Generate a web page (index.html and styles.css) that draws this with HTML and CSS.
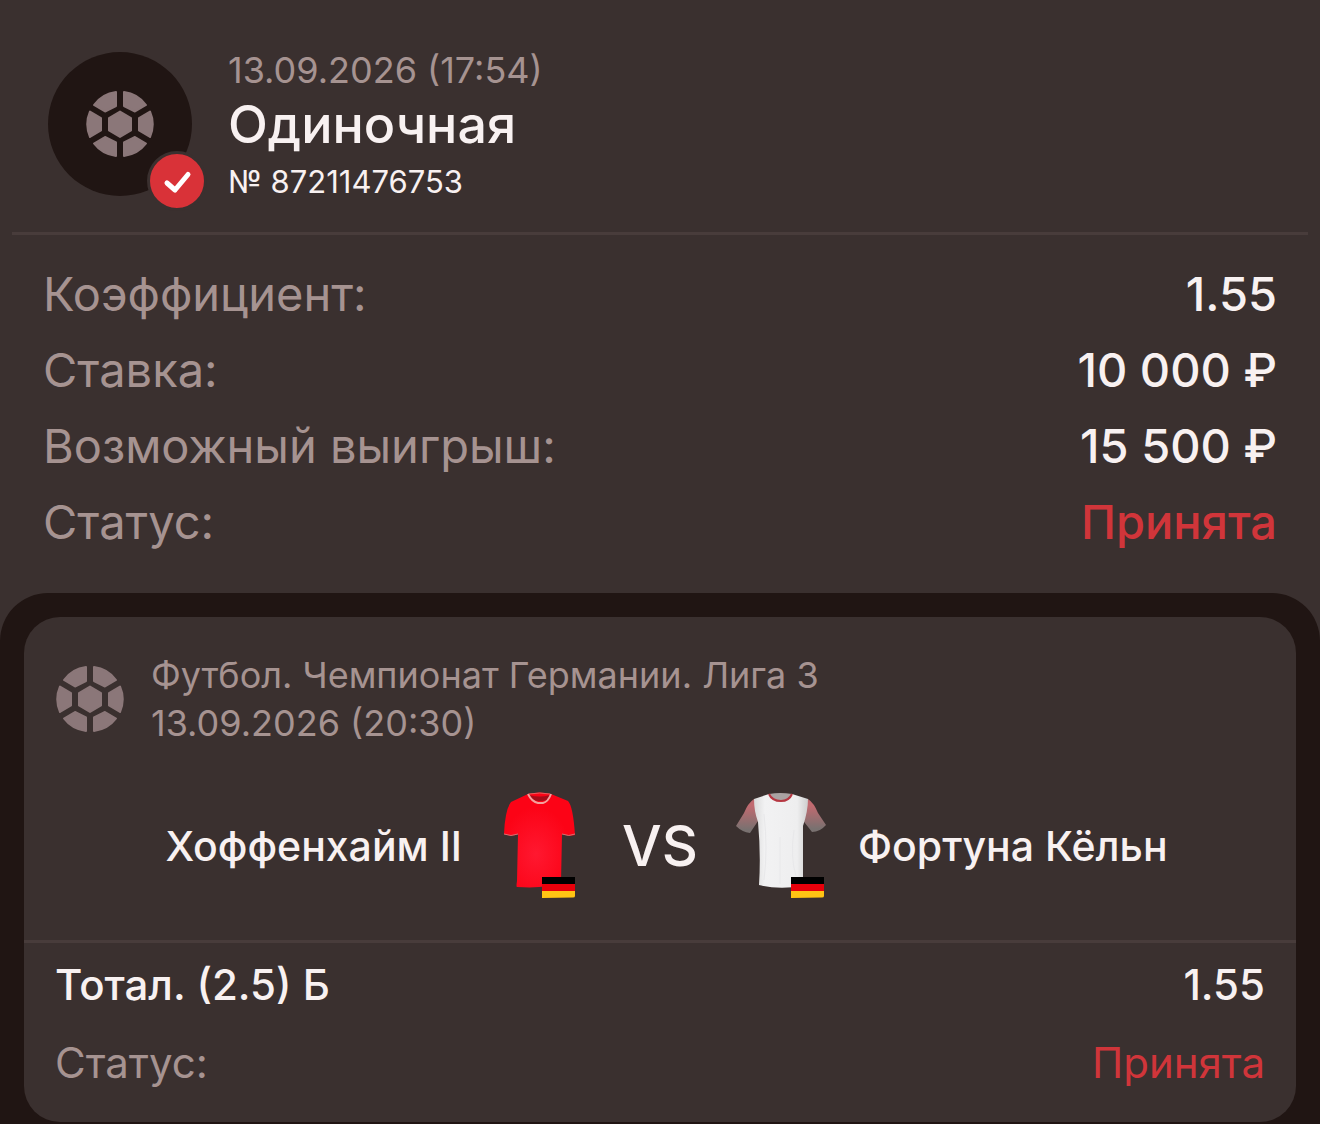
FILE: index.html
```html
<!DOCTYPE html>
<html lang="ru">
<head>
    <meta charset="UTF-8">
    <meta name="viewport" content="width=device-width, initial-scale=1.0">
    <title>Одиночная ставка</title>
    <link rel="stylesheet" href="styles.css">
</head>
<body>
    <!-- shared icons -->
    <svg class="sprite" aria-hidden="true">
        <symbol id="ball" viewBox="0 0 68 68">
            <g fill="#8b7779" stroke="#8b7779" stroke-width="2" stroke-linejoin="round">
                <path d="M34 21.5 L45 28 V40.5 L34 47 L23 40.5 V28 Z"/>
                <path d="M30 2 A32 32 0 0 0 8 15 L19 21.5 L30 16 Z"/>
                <path d="M38 2 A32 32 0 0 1 60 15 L49 21.5 L38 16 Z"/>
                <path d="M4 21.5 A32 32 0 0 0 4 47 L15 40.5 V28 Z"/>
                <path d="M64 21.5 A32 32 0 0 1 64 47 L53 40.5 V28 Z"/>
                <path d="M30 66 A32 32 0 0 1 8 53.5 L19 47 L30 52.5 Z"/>
                <path d="M38 66 A32 32 0 0 0 60 53.5 L49 47 L38 52.5 Z"/>
            </g>
        </symbol>
        <symbol id="flag" viewBox="0 0 33 21">
            <rect width="33" height="7" fill="#000"/>
            <rect y="7" width="33" height="7" fill="#e8000b"/>
            <path d="M0 14 H33 V19 Q33 20.500 31 20.500 L0 21 Z" fill="#ffc414"/>
        </symbol>
    </svg>

    <header class="bet-header">
        <div class="avatar">
            <svg class="ball"><use href="#ball"/></svg>
            <span class="check">
                <svg viewBox="0 0 54 54"><path d="M17 29 L25 36 L38 20.500" fill="none" stroke="#fff" stroke-width="5" stroke-linecap="round" stroke-linejoin="round"/></svg>
            </span>
        </div>
        <div class="bet-title">
            <p class="muted">13.09.2026 (17:54)</p>
            <h1>Одиночная</h1>
            <p class="number">№ 87211476753</p>
        </div>
    </header>

    <dl class="summary">
        <div><dt>Коэффициент:</dt><dd>1.55</dd></div>
        <div><dt>Ставка:</dt><dd>10 000 ₽</dd></div>
        <div><dt>Возможный выигрыш:</dt><dd>15 500 ₽</dd></div>
        <div><dt>Статус:</dt><dd class="accepted">Принята</dd></div>
    </dl>

    <main class="events">
        <section class="event">
            <div class="event-info">
                <svg class="ball"><use href="#ball"/></svg>
                <div class="muted">
                    <p>Футбол. Чемпионат Германии. Лига 3</p>
                    <p>13.09.2026 (20:30)</p>
                </div>
            </div>
            <div class="teams">
                <span class="team home">Хоффенхайм II</span>
                <svg class="shirt" viewBox="0 0 96 108">
                    <defs>
                        <radialGradient id="redShirt" cx="45%" cy="65%">
                            <stop offset="0" stop-color="#ff1830"/>
                            <stop offset="1" stop-color="#fc0316"/>
                        </radialGradient>
                    </defs>
                    <path d="M36 2 Q48 -1 59 2 L76 9 Q81 14 83 43 Q77 45 70 42 L69 90 Q55 97 25 95 Q24 95 25 89 L26 42 Q19 45 12 42 Q13 18 19 10 Z" fill="url(#redShirt)"/>
                    <path d="M37 3 Q48 6 58 3 L55 8 Q48 10 41 8 Z" fill="#a50c18"/>
                    <path d="M36 2 Q40 10 46 11 H51 Q56 10 59 2" fill="none" stroke="#f4a19d" stroke-width="2"/>
                    <path d="M37 2 Q48 0 58 2" fill="none" stroke="#e75c5c"/>
                    <path d="M12 42 Q19 45 26 42 M70 42 Q77 45 83 42" fill="none" stroke="#d86f70"/>
                    <use href="#flag" x="50" y="85" width="33" height="21"/>
                </svg>
                <span class="versus">VS</span>
                <svg class="shirt" viewBox="0 0 96 108">
                    <defs>
                        <linearGradient id="sleeve" x1="0" y1="0" x2="0" y2="1">
                            <stop offset="0.2" stop-color="#c16a70"/>
                            <stop offset="0.9" stop-color="#797170"/>
                        </linearGradient>
                        <linearGradient id="whiteShirt">
                            <stop offset="0" stop-color="#dadada"/>
                            <stop offset="0.2" stop-color="#f2f2f3"/>
                            <stop offset="0.8" stop-color="#eeeeef"/>
                            <stop offset="1" stop-color="#cecece"/>
                        </linearGradient>
                    </defs>
                    <path d="M22 7 Q16 11 12 21 L4 34 Q10 40 18 41 L28 26 Z" fill="url(#sleeve)"/>
                    <path d="M76 7 Q82 11 86 21 L94 33 Q88 40 80 40 L69 26 Z" fill="url(#sleeve)"/>
                    <path d="M37 2 L22 7 Q22 19 26 30 Q29 62 27 93 Q46 98 71 94 Q71 62 71 34 Q76 19 76 7 L60 2 Z" fill="url(#whiteShirt)"/>
                    <path d="M37 2 Q48 0 60 2 Q57 9 49 9 Q40 9 37 2 Z" fill="#aaa3a3"/>
                    <path d="M37 2 Q40 9 49 9 Q57 9 60 2" fill="none" stroke="#b63742" stroke-width="2"/>
                    <path d="M32 22 Q36 57 32 88 M48 45 V92 M62 38 Q58 65 64 84" fill="none" stroke="#e8e8ea"/>
                    <use href="#flag" x="59" y="85" width="33" height="21"/>
                </svg>
                <span class="team">Фортуна Кёльн</span>
            </div>
            <dl class="outcome">
                <div class="pick"><dt>Тотал. (2.5) Б</dt><dd>1.55</dd></div>
                <div><dt>Статус:</dt><dd class="accepted">Принята</dd></div>
            </dl>
        </section>
    </main>
</body>
</html>
```
FILE: styles.css
```css
* { box-sizing: border-box; }
body { font-family: Inter, "Noto Sans", sans-serif; margin: 0; background-color: #3a302f; color: #f8f1f1; min-height: 100vh; display: flex; flex-direction: column; }
p, h1, dl, dd { margin: 0; }
.sprite { position: absolute; width: 0; height: 0; }
.muted { color: #a69391; font-size: 36px; line-height: 48px; }
.ball { width: 68px; height: 68px; display: block; flex: none; }

.bet-header { display: flex; gap: 36px; margin: 0 12px; padding: 46px 36px 24px; border-bottom: 3px solid #483c3b; }
.avatar { position: relative; flex: none; width: 144px; height: 144px; margin-top: 6px; border-radius: 50%; background: #201513; display: flex; align-items: center; justify-content: center; }
.check { position: absolute; right: -15px; bottom: -15px; width: 60px; height: 60px; border: 3px solid #3a302f; border-radius: 50%; background: #d93238; }
.check svg { display: block; }
h1 { font-size: 52px; line-height: 62px; font-weight: 500; }
.number { font-size: 31px; line-height: 52px; }

.summary { padding: 21px 43px 33px; font-size: 47px; line-height: 76px; }
.summary div, .outcome div { display: flex; justify-content: space-between; }
dt { color: #a69391; }
dd { font-weight: 500; }
.accepted { color: #d0353a; }

.events { flex: 1; padding: 24px 24px 2px; background: #201513; border-radius: 48px 48px 0 0; }
.event { background: #3a302f; border-radius: 36px; padding-bottom: 20px; }
.event-info { display: flex; align-items: center; gap: 27px; padding: 34px 32px 0; }
.teams { display: grid; grid-template-columns: 1fr 96px 144px 96px 1fr; align-items: center; padding: 45px 0 40px; border-bottom: 3px solid #483c3b; }
.team { font-size: 41px; line-height: 48px; font-weight: 500; padding: 0 30px; }
.home { text-align: right; }
.shirt { width: 96px; height: 108px; display: block; }
.versus { font-size: 56px; line-height: 72px; font-weight: 500; text-align: center; }
.outcome { padding: 3px 31px 0; font-size: 42px; line-height: 78px; }
.outcome dd { font-weight: 400; }
.pick, .pick dt, .pick dd { color: #f8f1f1; font-weight: 500; }
```
